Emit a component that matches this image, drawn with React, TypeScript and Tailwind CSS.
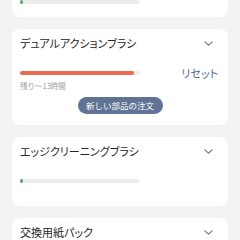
import React from "react";

const Chevron = () => (
  <svg width="9" height="5" viewBox="0 0 9 5" fill="none">
    <polyline points="0.8,0.8 4.5,4.2 8.2,0.8" stroke="#707070" strokeWidth="1.1" strokeLinecap="round" strokeLinejoin="round" />
  </svg>
);

const Header = ({ title }: { title: string }) => (
  <div className="flex h-[29px] items-center justify-between pl-[8px] pr-[15px]">
    <span className="text-[11px] text-[#262626] [font-feature-settings:'palt'] leading-none">{title}</span>
    <Chevron />
  </div>
);

export default function App() {
  return (
    <div
      className="h-[240px] w-[240px] overflow-hidden bg-[#f3f3f3] px-3"
      style={{ fontFamily: '"Noto Sans CJK JP", "Noto Sans", sans-serif' }}
    >
      <div className="-mt-[14px] flex flex-col gap-3">
        <div className="flex h-[31px] flex-col justify-end rounded-[8px] bg-white pb-[13px] pl-[8px]">
          <div className="h-[4px] w-[120px] rounded-full bg-[#ececec]">
            <div className="h-[4px] w-[3px] rounded-full bg-[#5fa86a]" />
          </div>
        </div>

        <div className="h-[96px] rounded-[8px] bg-white">
          <Header title="デュアルアクションブラシ" />
          <div className="mt-[8px] flex h-[14px] items-center pl-[8px] pr-[10px]">
            <div className="h-[4px] w-[120px] rounded-full bg-[#ececec]">
              <div className="h-[4px] w-[114px] rounded-full bg-[#ee6a4f]" />
            </div>
            <span className="ml-auto text-[11px] leading-none text-[#4f6b94] [font-feature-settings:'palt']">リセット</span>
          </div>
          <div className="mt-[1px] pl-[8px] text-[7.5px] leading-[10px] text-[#9a9a9a]">残り〜13時間</div>
          <div className="mt-[6px] flex justify-center">
            <div className="flex h-[17px] w-[85px] items-center justify-center rounded-full bg-[#5f7494] text-[8.5px] leading-none text-white">
              新しい部品の注文
            </div>
          </div>
        </div>

        <div className="h-[69px] rounded-[8px] bg-white">
          <Header title="エッジクリーニングブラシ" />
          <div className="mt-[8px] flex h-[14px] items-center pl-[8px]">
            <div className="h-[4px] w-[120px] rounded-full bg-[#ececec]">
              <div className="h-[4px] w-[3px] rounded-full bg-[#5fa86a]" />
            </div>
          </div>
        </div>

        <div className="h-[69px] rounded-[8px] bg-white">
          <Header title="交換用紙パック" />
        </div>
      </div>
    </div>
  );
}
